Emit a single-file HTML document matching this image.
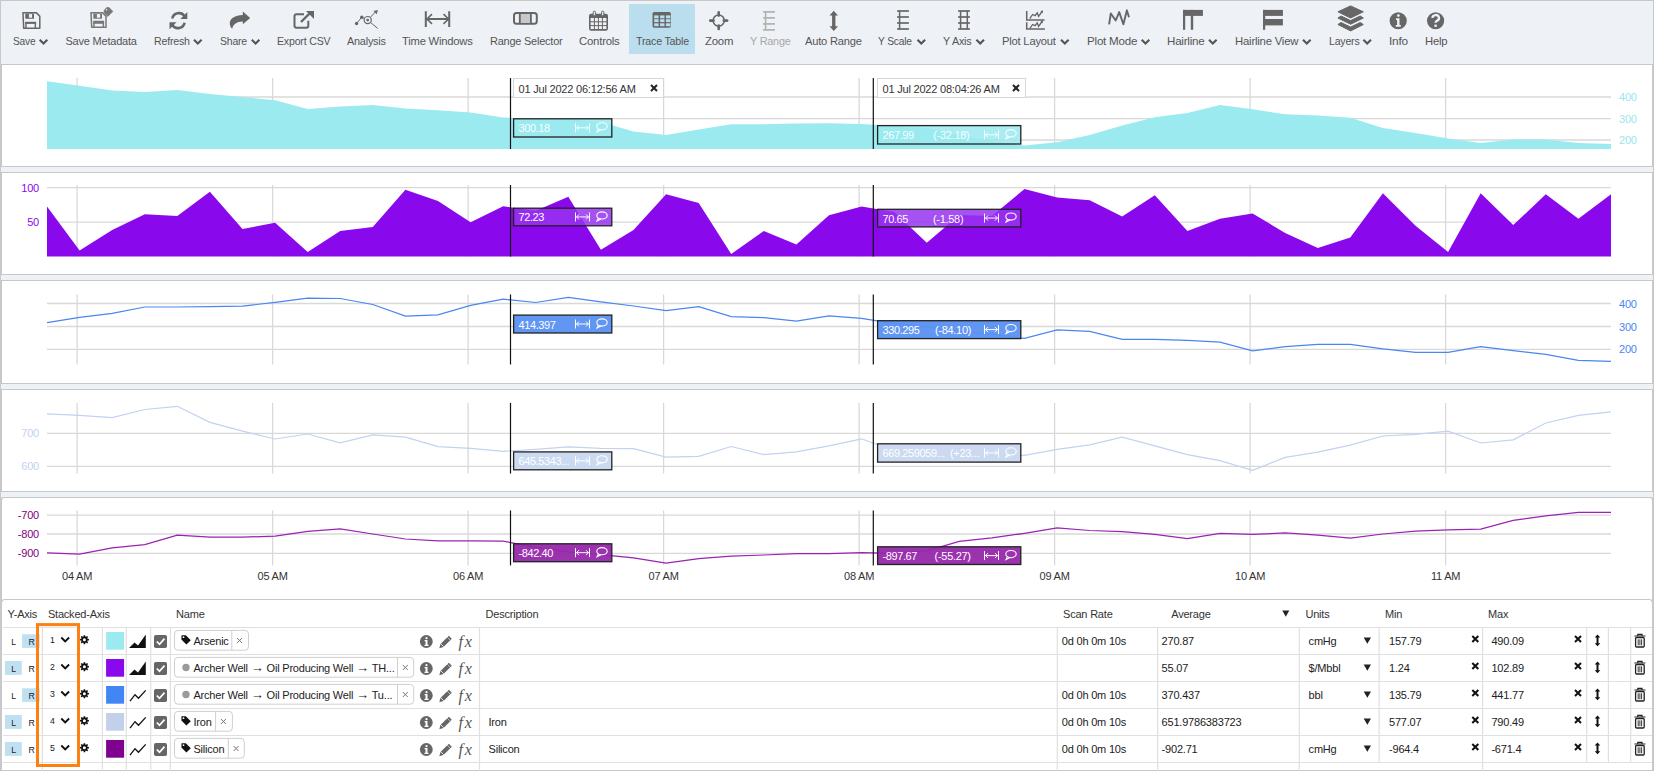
<!DOCTYPE html>
<html><head><meta charset="utf-8"><style>
*{box-sizing:border-box;margin:0;padding:0}
html,body{width:1654px;height:771px;overflow:hidden;background:#eef1f5;font-family:"Liberation Sans", sans-serif;font-size:11px;letter-spacing:-0.2px;color:#222}
.a{position:absolute;white-space:nowrap;line-height:1}
.tb{color:#555}
</style></head><body>

<div class="a" style="left:0;top:0;width:1654px;height:65px;background:#eef1f5;border:1px solid #c8c8c8"></div>
<div class="a" style="left:0;top:64px;width:1654px;height:103px;background:#fff;border:1px solid #c8c8c8;border-left:2px solid #c8c8c8;border-right:2px solid #c8c8c8;"></div>
<div class="a" style="left:0;top:172px;width:1654px;height:103px;background:#fff;border:1px solid #c8c8c8;border-left:2px solid #c8c8c8;border-right:2px solid #c8c8c8;"></div>
<div class="a" style="left:0;top:280px;width:1654px;height:104px;background:#fff;border:1px solid #c8c8c8;border-left:2px solid #c8c8c8;border-right:2px solid #c8c8c8;"></div>
<div class="a" style="left:0;top:389px;width:1654px;height:103px;background:#fff;border:1px solid #c8c8c8;border-left:2px solid #c8c8c8;border-right:2px solid #c8c8c8;"></div>
<div class="a" style="left:0;top:497px;width:1654px;height:107px;background:#fff;border:1px solid #c8c8c8;border-left:2px solid #c8c8c8;border-right:2px solid #c8c8c8;border-top-left-radius:4px;border-top-right-radius:4px;"></div>
<div class="a" style="left:0;top:599px;width:1654px;height:172px;background:#fff;border:1px solid #c8c8c8;border-left:2px solid #c8c8c8;border-right:2px solid #c8c8c8;border-top-left-radius:5px;border-top-right-radius:5px"></div>
<div class="a" style="left:0;top:0;width:1px;height:771px;background:#c8c8c8"></div>
<div class="a" style="left:1653px;top:0;width:1px;height:771px;background:#c8c8c8"></div>
<svg class="a" style="left:0;top:0" width="1654" height="771" font-family='"Liberation Sans", sans-serif' font-size="11" letter-spacing="-0.2">
<line x1="47" y1="97" x2="1611" y2="97" stroke="#d9d9d9" stroke-width="1.3"/>
<line x1="47" y1="118.6" x2="1611" y2="118.6" stroke="#d9d9d9" stroke-width="1.3"/>
<line x1="47" y1="140" x2="1611" y2="140" stroke="#d9d9d9" stroke-width="1.3"/>
<line x1="77.1" y1="78" x2="77.1" y2="149" stroke="#d9d9d9" stroke-width="1.3"/>
<line x1="272.6" y1="78" x2="272.6" y2="149" stroke="#d9d9d9" stroke-width="1.3"/>
<line x1="468.1" y1="78" x2="468.1" y2="149" stroke="#d9d9d9" stroke-width="1.3"/>
<line x1="663.6" y1="78" x2="663.6" y2="149" stroke="#d9d9d9" stroke-width="1.3"/>
<line x1="859.1" y1="78" x2="859.1" y2="149" stroke="#d9d9d9" stroke-width="1.3"/>
<line x1="1054.6" y1="78" x2="1054.6" y2="149" stroke="#d9d9d9" stroke-width="1.3"/>
<line x1="1250.1" y1="78" x2="1250.1" y2="149" stroke="#d9d9d9" stroke-width="1.3"/>
<line x1="1445.6" y1="78" x2="1445.6" y2="149" stroke="#d9d9d9" stroke-width="1.3"/>
<line x1="47" y1="187.6" x2="1611" y2="187.6" stroke="#d9d9d9" stroke-width="1.3"/>
<line x1="47" y1="222.2" x2="1611" y2="222.2" stroke="#d9d9d9" stroke-width="1.3"/>
<line x1="77.1" y1="185" x2="77.1" y2="256.5" stroke="#d9d9d9" stroke-width="1.3"/>
<line x1="272.6" y1="185" x2="272.6" y2="256.5" stroke="#d9d9d9" stroke-width="1.3"/>
<line x1="468.1" y1="185" x2="468.1" y2="256.5" stroke="#d9d9d9" stroke-width="1.3"/>
<line x1="663.6" y1="185" x2="663.6" y2="256.5" stroke="#d9d9d9" stroke-width="1.3"/>
<line x1="859.1" y1="185" x2="859.1" y2="256.5" stroke="#d9d9d9" stroke-width="1.3"/>
<line x1="1054.6" y1="185" x2="1054.6" y2="256.5" stroke="#d9d9d9" stroke-width="1.3"/>
<line x1="1250.1" y1="185" x2="1250.1" y2="256.5" stroke="#d9d9d9" stroke-width="1.3"/>
<line x1="1445.6" y1="185" x2="1445.6" y2="256.5" stroke="#d9d9d9" stroke-width="1.3"/>
<line x1="47" y1="303.5" x2="1611" y2="303.5" stroke="#d9d9d9" stroke-width="1.3"/>
<line x1="47" y1="326.5" x2="1611" y2="326.5" stroke="#d9d9d9" stroke-width="1.3"/>
<line x1="47" y1="349.3" x2="1611" y2="349.3" stroke="#d9d9d9" stroke-width="1.3"/>
<line x1="77.1" y1="294.4" x2="77.1" y2="364.5" stroke="#d9d9d9" stroke-width="1.3"/>
<line x1="272.6" y1="294.4" x2="272.6" y2="364.5" stroke="#d9d9d9" stroke-width="1.3"/>
<line x1="468.1" y1="294.4" x2="468.1" y2="364.5" stroke="#d9d9d9" stroke-width="1.3"/>
<line x1="663.6" y1="294.4" x2="663.6" y2="364.5" stroke="#d9d9d9" stroke-width="1.3"/>
<line x1="859.1" y1="294.4" x2="859.1" y2="364.5" stroke="#d9d9d9" stroke-width="1.3"/>
<line x1="1054.6" y1="294.4" x2="1054.6" y2="364.5" stroke="#d9d9d9" stroke-width="1.3"/>
<line x1="1250.1" y1="294.4" x2="1250.1" y2="364.5" stroke="#d9d9d9" stroke-width="1.3"/>
<line x1="1445.6" y1="294.4" x2="1445.6" y2="364.5" stroke="#d9d9d9" stroke-width="1.3"/>
<line x1="47" y1="433.4" x2="1611" y2="433.4" stroke="#d9d9d9" stroke-width="1.3"/>
<line x1="47" y1="466.4" x2="1611" y2="466.4" stroke="#d9d9d9" stroke-width="1.3"/>
<line x1="77.1" y1="402.9" x2="77.1" y2="473.6" stroke="#d9d9d9" stroke-width="1.3"/>
<line x1="272.6" y1="402.9" x2="272.6" y2="473.6" stroke="#d9d9d9" stroke-width="1.3"/>
<line x1="468.1" y1="402.9" x2="468.1" y2="473.6" stroke="#d9d9d9" stroke-width="1.3"/>
<line x1="663.6" y1="402.9" x2="663.6" y2="473.6" stroke="#d9d9d9" stroke-width="1.3"/>
<line x1="859.1" y1="402.9" x2="859.1" y2="473.6" stroke="#d9d9d9" stroke-width="1.3"/>
<line x1="1054.6" y1="402.9" x2="1054.6" y2="473.6" stroke="#d9d9d9" stroke-width="1.3"/>
<line x1="1250.1" y1="402.9" x2="1250.1" y2="473.6" stroke="#d9d9d9" stroke-width="1.3"/>
<line x1="1445.6" y1="402.9" x2="1445.6" y2="473.6" stroke="#d9d9d9" stroke-width="1.3"/>
<line x1="47" y1="515.1" x2="1611" y2="515.1" stroke="#d9d9d9" stroke-width="1.3"/>
<line x1="47" y1="534" x2="1611" y2="534" stroke="#d9d9d9" stroke-width="1.3"/>
<line x1="47" y1="553.4" x2="1611" y2="553.4" stroke="#d9d9d9" stroke-width="1.3"/>
<line x1="77.1" y1="510.4" x2="77.1" y2="565.4" stroke="#d9d9d9" stroke-width="1.3"/>
<line x1="272.6" y1="510.4" x2="272.6" y2="565.4" stroke="#d9d9d9" stroke-width="1.3"/>
<line x1="468.1" y1="510.4" x2="468.1" y2="565.4" stroke="#d9d9d9" stroke-width="1.3"/>
<line x1="663.6" y1="510.4" x2="663.6" y2="565.4" stroke="#d9d9d9" stroke-width="1.3"/>
<line x1="859.1" y1="510.4" x2="859.1" y2="565.4" stroke="#d9d9d9" stroke-width="1.3"/>
<line x1="1054.6" y1="510.4" x2="1054.6" y2="565.4" stroke="#d9d9d9" stroke-width="1.3"/>
<line x1="1250.1" y1="510.4" x2="1250.1" y2="565.4" stroke="#d9d9d9" stroke-width="1.3"/>
<line x1="1445.6" y1="510.4" x2="1445.6" y2="565.4" stroke="#d9d9d9" stroke-width="1.3"/>
<polygon points="47,149 47.0,81.3 79.6,85.7 112.2,90.4 144.8,92.0 177.3,90.1 209.9,93.9 242.5,97.0 275.1,100.2 307.7,109.0 340.2,106.5 372.8,104.9 405.4,108.4 438.0,110.2 470.6,112.4 503.2,117.5 535.8,118.5 568.3,119.0 600.9,122.0 633.5,131.4 666.1,134.9 698.7,129.6 731.2,124.3 763.8,124.3 796.4,123.6 829.0,123.3 861.6,124.0 894.2,126.0 926.8,128.0 959.3,135.4 991.9,141.2 1024.5,145.5 1057.1,142.2 1089.7,134.9 1122.2,125.4 1154.8,117.3 1187.4,113.1 1220.0,105.1 1252.6,109.3 1285.2,114.2 1317.8,115.6 1350.3,117.7 1382.9,127.9 1415.5,133.1 1448.1,138.4 1480.7,142.9 1513.2,139.4 1545.8,139.4 1578.4,142.9 1611.0,144.0 1611,149" fill="#9aeaf0"/>
<polygon points="47,256.5 47.0,206.4 79.6,250.4 112.2,230.0 144.8,214.3 177.3,215.9 209.9,191.7 242.5,229.0 275.1,222.8 307.7,252.0 340.2,231.0 372.8,226.9 405.4,189.8 438.0,201.1 470.6,222.2 503.2,206.2 535.8,210.8 568.3,196.7 600.9,249.7 633.5,230.0 666.1,194.3 698.7,203.0 731.2,253.9 763.8,231.1 796.4,244.4 829.0,215.3 861.6,206.6 894.2,212.0 926.8,242.7 959.3,215.0 991.9,216.0 1024.5,189.0 1057.1,197.5 1089.7,200.2 1122.2,216.4 1154.8,195.3 1187.4,231.1 1220.0,218.8 1252.6,213.6 1285.2,232.9 1317.8,247.9 1350.3,237.4 1382.9,193.2 1415.5,225.8 1448.1,252.1 1480.7,193.2 1513.2,225.1 1545.8,194.3 1578.4,218.8 1611.0,194.3 1611,256.5" fill="#8a08ec"/>
<polyline points="47.0,322.7 79.6,317.4 112.2,313.3 144.8,307.0 177.3,307.0 209.9,306.7 242.5,306.1 275.1,302.3 307.7,298.2 340.2,298.5 372.8,304.5 405.4,316.1 438.0,314.9 470.6,305.4 503.2,299.1 535.8,302.5 568.3,297.3 600.9,301.8 633.5,306.0 666.1,310.6 698.7,306.7 731.2,316.6 763.8,317.6 796.4,321.1 829.0,315.9 861.6,318.3 894.2,323.6 926.8,327.1 959.3,331.0 991.9,334.4 1024.5,338.3 1057.1,329.9 1089.7,331.3 1122.2,339.3 1154.8,339.3 1187.4,340.4 1220.0,342.2 1252.6,350.9 1285.2,346.7 1317.8,344.3 1350.3,344.3 1382.9,348.8 1415.5,352.3 1448.1,352.3 1480.7,346.7 1513.2,350.6 1545.8,354.4 1578.4,360.4 1611.0,361.4" fill="none" stroke="#4a86f0" stroke-width="1.2"/>
<polyline points="47.0,413.9 79.6,415.4 112.2,417.6 144.8,409.5 177.3,406.3 209.9,422.4 242.5,431.2 275.1,439.0 307.7,434.0 340.2,442.8 372.8,434.9 405.4,437.1 438.0,446.6 470.6,448.4 503.2,451.3 535.8,449.3 568.3,446.9 600.9,448.3 633.5,448.6 666.1,457.1 698.7,456.4 731.2,446.5 763.8,454.6 796.4,451.8 829.0,445.8 861.6,438.8 894.2,451.0 926.8,455.0 959.3,456.0 991.9,455.5 1024.5,455.3 1057.1,449.3 1089.7,444.8 1122.2,437.1 1154.8,445.8 1187.4,454.6 1220.0,460.6 1252.6,470.4 1285.2,457.4 1317.8,452.2 1350.3,445.1 1382.9,436.0 1415.5,434.3 1448.1,431.1 1480.7,443.0 1513.2,439.9 1545.8,423.0 1578.4,415.3 1611.0,411.8" fill="none" stroke="#c2d2f0" stroke-width="1.2"/>
<polyline points="47.0,552.8 79.6,554.1 112.2,547.8 144.8,544.6 177.3,535.2 209.9,537.1 242.5,537.1 275.1,536.2 307.7,531.4 340.2,528.9 372.8,534.0 405.4,539.0 438.0,540.9 470.6,540.9 503.2,541.2 535.8,547.3 568.3,551.9 600.9,554.7 633.5,557.9 666.1,563.1 698.7,558.6 731.2,556.1 763.8,555.0 796.4,553.6 829.0,553.6 861.6,552.6 894.2,553.3 926.8,550.8 959.3,541.4 991.9,537.9 1024.5,533.3 1057.1,528.0 1089.7,530.5 1122.2,531.6 1154.8,534.4 1187.4,538.6 1220.0,533.3 1252.6,534.4 1285.2,533.0 1317.8,535.1 1350.3,538.2 1382.9,534.0 1415.5,531.2 1448.1,529.8 1480.7,529.1 1513.2,520.3 1545.8,515.8 1578.4,512.3 1611.0,512.3" fill="none" stroke="#9a22b4" stroke-width="1.25"/>
<text x="1619" y="101" fill="#9ae6ee" text-anchor="start" >400</text>
<text x="1619" y="122.6" fill="#9ae6ee" text-anchor="start" >300</text>
<text x="1619" y="144" fill="#9ae6ee" text-anchor="start" >200</text>
<text x="39" y="191.6" fill="#8a08ec" text-anchor="end" >100</text>
<text x="39" y="226.2" fill="#8a08ec" text-anchor="end" >50</text>
<text x="1619" y="307.5" fill="#4a86f0" text-anchor="start" >400</text>
<text x="1619" y="330.5" fill="#4a86f0" text-anchor="start" >300</text>
<text x="1619" y="353.3" fill="#4a86f0" text-anchor="start" >200</text>
<text x="39" y="437.4" fill="#c2d2f0" text-anchor="end" >700</text>
<text x="39" y="470.4" fill="#c2d2f0" text-anchor="end" >600</text>
<text x="39" y="519.1" fill="#800080" text-anchor="end" >-700</text>
<text x="39" y="538" fill="#800080" text-anchor="end" >-800</text>
<text x="39" y="557.4" fill="#800080" text-anchor="end" >-900</text>
<text x="77.1" y="580" fill="#333" text-anchor="middle" >04 AM</text>
<text x="272.6" y="580" fill="#333" text-anchor="middle" >05 AM</text>
<text x="468.1" y="580" fill="#333" text-anchor="middle" >06 AM</text>
<text x="663.6" y="580" fill="#333" text-anchor="middle" >07 AM</text>
<text x="859.1" y="580" fill="#333" text-anchor="middle" >08 AM</text>
<text x="1054.6" y="580" fill="#333" text-anchor="middle" >09 AM</text>
<text x="1250.1" y="580" fill="#333" text-anchor="middle" >10 AM</text>
<text x="1445.6" y="580" fill="#333" text-anchor="middle" >11 AM</text>
<line x1="510.5" y1="78" x2="510.5" y2="149" stroke="#111" stroke-width="1.2"/>
<line x1="510.5" y1="185" x2="510.5" y2="256.5" stroke="#111" stroke-width="1.2"/>
<line x1="510.5" y1="294.4" x2="510.5" y2="364.5" stroke="#111" stroke-width="1.2"/>
<line x1="510.5" y1="402.9" x2="510.5" y2="473.6" stroke="#111" stroke-width="1.2"/>
<line x1="510.5" y1="510.4" x2="510.5" y2="565.4" stroke="#111" stroke-width="1.2"/>
<line x1="873.3" y1="78" x2="873.3" y2="149" stroke="#111" stroke-width="1.2"/>
<line x1="873.3" y1="185" x2="873.3" y2="256.5" stroke="#111" stroke-width="1.2"/>
<line x1="873.3" y1="294.4" x2="873.3" y2="364.5" stroke="#111" stroke-width="1.2"/>
<line x1="873.3" y1="402.9" x2="873.3" y2="473.6" stroke="#111" stroke-width="1.2"/>
<line x1="873.3" y1="510.4" x2="873.3" y2="565.4" stroke="#111" stroke-width="1.2"/>
<rect x="513.5" y="78.5" width="150" height="19" fill="#fff" stroke="#d6d6d6" stroke-width="1"/>
<text x="518.5" y="92.5" fill="#333" text-anchor="start" >01 Jul 2022 06:12:56 AM</text>
<path d="M651,85 l6,6 M657,85 l-6,6" stroke="#222" stroke-width="2"/>
<rect x="877.5" y="78.5" width="148" height="19" fill="#fff" stroke="#d6d6d6" stroke-width="1"/>
<text x="882.5" y="92.5" fill="#333" text-anchor="start" >01 Jul 2022 08:04:26 AM</text>
<path d="M1013,85 l6,6 M1019,85 l-6,6" stroke="#222" stroke-width="2"/>
<rect x="513.6" y="118.8" width="98.2" height="18.2" fill="rgba(154,234,240,0.85)" stroke="#222" stroke-width="1.3"/>
<text x="518.5" y="132.35000000000002" fill="#f4ffff" text-anchor="start" letter-spacing="-0.4">300.18</text>
<path d="M575.5,123.35000000000001 v9 M589.5,123.35000000000001 v9 M576.5,127.85000000000001 h12 M579,125.35000000000001 l-2.5,2.5 l2.5,2.5 M586,125.35000000000001 l2.5,2.5 l-2.5,2.5" fill="none" stroke="#f4ffff" stroke-width="1"/>
<ellipse cx="602" cy="126.35000000000001" rx="5.2" ry="3.6" fill="none" stroke="#f4ffff" stroke-width="1.1"/>
<path d="M598.5,128.85000000000002 l-1.5,3 l4,-2" fill="none" stroke="#f4ffff" stroke-width="1.1"/>
<rect x="877.6" y="125.6" width="143.2" height="18.4" fill="rgba(154,234,240,0.85)" stroke="#222" stroke-width="1.3"/>
<text x="882.5" y="139.25" fill="#f4ffff" text-anchor="start" letter-spacing="-0.4">267.99</text>
<text x="933.3" y="139.25" fill="#f4ffff" text-anchor="start" letter-spacing="-0.3">(-32.18)</text>
<path d="M984.5,130.25 v9 M998.5,130.25 v9 M985.5,134.75 h12 M988,132.25 l-2.5,2.5 l2.5,2.5 M995,132.25 l2.5,2.5 l-2.5,2.5" fill="none" stroke="#f4ffff" stroke-width="1"/>
<ellipse cx="1011" cy="133.25" rx="5.2" ry="3.6" fill="none" stroke="#f4ffff" stroke-width="1.1"/>
<path d="M1007.5,135.75 l-1.5,3 l4,-2" fill="none" stroke="#f4ffff" stroke-width="1.1"/>
<rect x="513.6" y="208.2" width="98.2" height="17.599999999999998" fill="rgba(150,50,240,0.85)" stroke="#222" stroke-width="1.3"/>
<text x="518.5" y="221.45" fill="#fff" text-anchor="start" letter-spacing="-0.4">72.23</text>
<path d="M575.5,212.45 v9 M589.5,212.45 v9 M576.5,216.95 h12 M579,214.45 l-2.5,2.5 l2.5,2.5 M586,214.45 l2.5,2.5 l-2.5,2.5" fill="none" stroke="#fff" stroke-width="1"/>
<ellipse cx="602" cy="215.45" rx="5.2" ry="3.6" fill="none" stroke="#fff" stroke-width="1.1"/>
<path d="M598.5,217.95 l-1.5,3 l4,-2" fill="none" stroke="#fff" stroke-width="1.1"/>
<rect x="877.6" y="209.29999999999998" width="143.2" height="17.599999999999998" fill="rgba(150,50,240,0.85)" stroke="#222" stroke-width="1.3"/>
<text x="882.5" y="222.54999999999998" fill="#fff" text-anchor="start" letter-spacing="-0.4">70.65</text>
<text x="933" y="222.54999999999998" fill="#fff" text-anchor="start" letter-spacing="-0.3">(-1.58)</text>
<path d="M984.5,213.54999999999998 v9 M998.5,213.54999999999998 v9 M985.5,218.04999999999998 h12 M988,215.54999999999998 l-2.5,2.5 l2.5,2.5 M995,215.54999999999998 l2.5,2.5 l-2.5,2.5" fill="none" stroke="#fff" stroke-width="1"/>
<ellipse cx="1011" cy="216.54999999999998" rx="5.2" ry="3.6" fill="none" stroke="#fff" stroke-width="1.1"/>
<path d="M1007.5,219.04999999999998 l-1.5,3 l4,-2" fill="none" stroke="#fff" stroke-width="1.1"/>
<rect x="513.6" y="315.1" width="98.2" height="17.9" fill="rgba(90,144,242,0.95)" stroke="#222" stroke-width="1.3"/>
<text x="518.5" y="328.5" fill="#fff" text-anchor="start" letter-spacing="-0.4">414.397</text>
<path d="M575.5,319.5 v9 M589.5,319.5 v9 M576.5,324.0 h12 M579,321.5 l-2.5,2.5 l2.5,2.5 M586,321.5 l2.5,2.5 l-2.5,2.5" fill="none" stroke="#fff" stroke-width="1"/>
<ellipse cx="602" cy="322.5" rx="5.2" ry="3.6" fill="none" stroke="#fff" stroke-width="1.1"/>
<path d="M598.5,325.0 l-1.5,3 l4,-2" fill="none" stroke="#fff" stroke-width="1.1"/>
<rect x="877.6" y="320.70000000000005" width="143.2" height="17.9" fill="rgba(90,144,242,0.95)" stroke="#222" stroke-width="1.3"/>
<text x="882.5" y="334.1" fill="#fff" text-anchor="start" letter-spacing="-0.4">330.295</text>
<text x="935" y="334.1" fill="#fff" text-anchor="start" letter-spacing="-0.3">(-84.10)</text>
<path d="M984.5,325.1 v9 M998.5,325.1 v9 M985.5,329.6 h12 M988,327.1 l-2.5,2.5 l2.5,2.5 M995,327.1 l2.5,2.5 l-2.5,2.5" fill="none" stroke="#fff" stroke-width="1"/>
<ellipse cx="1011" cy="328.1" rx="5.2" ry="3.6" fill="none" stroke="#fff" stroke-width="1.1"/>
<path d="M1007.5,330.6 l-1.5,3 l4,-2" fill="none" stroke="#fff" stroke-width="1.1"/>
<rect x="513.6" y="451.90000000000003" width="98.2" height="17.9" fill="rgba(200,216,240,0.95)" stroke="#222" stroke-width="1.3"/>
<text x="518.5" y="465.3" fill="#fff" text-anchor="start" letter-spacing="-0.4">645.5343...</text>
<path d="M575.5,456.3 v9 M589.5,456.3 v9 M576.5,460.8 h12 M579,458.3 l-2.5,2.5 l2.5,2.5 M586,458.3 l2.5,2.5 l-2.5,2.5" fill="none" stroke="#fff" stroke-width="1"/>
<ellipse cx="602" cy="459.3" rx="5.2" ry="3.6" fill="none" stroke="#fff" stroke-width="1.1"/>
<path d="M598.5,461.8 l-1.5,3 l4,-2" fill="none" stroke="#fff" stroke-width="1.1"/>
<rect x="877.6" y="443.8" width="143.2" height="18.299999999999997" fill="rgba(200,216,240,0.95)" stroke="#222" stroke-width="1.3"/>
<text x="882.5" y="457.4" fill="#fff" text-anchor="start" letter-spacing="-0.4">669.259059...</text>
<text x="950" y="457.4" fill="#fff" text-anchor="start" letter-spacing="-0.3">(+23...</text>
<path d="M984.5,448.4 v9 M998.5,448.4 v9 M985.5,452.9 h12 M988,450.4 l-2.5,2.5 l2.5,2.5 M995,450.4 l2.5,2.5 l-2.5,2.5" fill="none" stroke="#fff" stroke-width="1"/>
<ellipse cx="1011" cy="451.4" rx="5.2" ry="3.6" fill="none" stroke="#fff" stroke-width="1.1"/>
<path d="M1007.5,453.9 l-1.5,3 l4,-2" fill="none" stroke="#fff" stroke-width="1.1"/>
<rect x="513.6" y="543.8000000000001" width="98.2" height="17.9" fill="rgba(150,40,170,0.95)" stroke="#222" stroke-width="1.3"/>
<text x="518.5" y="557.2" fill="#fff" text-anchor="start" letter-spacing="-0.4">-842.40</text>
<path d="M575.5,548.2 v9 M589.5,548.2 v9 M576.5,552.7 h12 M579,550.2 l-2.5,2.5 l2.5,2.5 M586,550.2 l2.5,2.5 l-2.5,2.5" fill="none" stroke="#fff" stroke-width="1"/>
<ellipse cx="602" cy="551.2" rx="5.2" ry="3.6" fill="none" stroke="#fff" stroke-width="1.1"/>
<path d="M598.5,553.7 l-1.5,3 l4,-2" fill="none" stroke="#fff" stroke-width="1.1"/>
<rect x="877.6" y="546.8000000000001" width="143.2" height="17.7" fill="rgba(150,40,170,0.95)" stroke="#222" stroke-width="1.3"/>
<text x="882.5" y="560.1" fill="#fff" text-anchor="start" letter-spacing="-0.4">-897.67</text>
<text x="934.6" y="560.1" fill="#fff" text-anchor="start" letter-spacing="-0.3">(-55.27)</text>
<path d="M984.5,551.1 v9 M998.5,551.1 v9 M985.5,555.6 h12 M988,553.1 l-2.5,2.5 l2.5,2.5 M995,553.1 l2.5,2.5 l-2.5,2.5" fill="none" stroke="#fff" stroke-width="1"/>
<ellipse cx="1011" cy="554.1" rx="5.2" ry="3.6" fill="none" stroke="#fff" stroke-width="1.1"/>
<path d="M1007.5,556.6 l-1.5,3 l4,-2" fill="none" stroke="#fff" stroke-width="1.1"/>
</svg>
<div class="a" style="left:629px;top:4px;width:66px;height:50px;background:#badeee"></div>
<div class="a tb" style="left:12.7px;top:35.5px;color:#555;transform:scaleX(0.925);transform-origin:0 0">Save</div>
<div class="a tb" style="left:65.4px;top:35.5px;color:#555;transform:scaleX(1.0);transform-origin:0 0">Save Metadata</div>
<div class="a tb" style="left:153.6px;top:35.5px;color:#555;transform:scaleX(0.962);transform-origin:0 0">Refresh</div>
<div class="a tb" style="left:219.7px;top:35.5px;color:#555;transform:scaleX(0.95);transform-origin:0 0">Share</div>
<div class="a tb" style="left:277.2px;top:35.5px;color:#555;transform:scaleX(0.962);transform-origin:0 0">Export CSV</div>
<div class="a tb" style="left:347px;top:35.5px;color:#555;transform:scaleX(0.985);transform-origin:0 0">Analysis</div>
<div class="a tb" style="left:402.4px;top:35.5px;color:#555;transform:scaleX(1.019);transform-origin:0 0">Time Windows</div>
<div class="a tb" style="left:489.6px;top:35.5px;color:#555;transform:scaleX(0.992);transform-origin:0 0">Range Selector</div>
<div class="a tb" style="left:578.6px;top:35.5px;color:#555;transform:scaleX(1.031);transform-origin:0 0">Controls</div>
<div class="a tb" style="left:635.7px;top:35.5px;color:#555;transform:scaleX(0.969);transform-origin:0 0">Trace Table</div>
<div class="a tb" style="left:704.5px;top:35.5px;color:#555;transform:scaleX(1.033);transform-origin:0 0">Zoom</div>
<div class="a tb" style="left:749.5px;top:35.5px;color:#a8a8a8;transform:scaleX(0.985);transform-origin:0 0">Y Range</div>
<div class="a tb" style="left:805.4px;top:35.5px;color:#555;transform:scaleX(1.012);transform-origin:0 0">Auto Range</div>
<div class="a tb" style="left:878.4px;top:35.5px;color:#555;transform:scaleX(0.933);transform-origin:0 0">Y Scale</div>
<div class="a tb" style="left:942.9px;top:35.5px;color:#555;transform:scaleX(0.976);transform-origin:0 0">Y Axis</div>
<div class="a tb" style="left:1001.7px;top:35.5px;color:#555;transform:scaleX(1.017);transform-origin:0 0">Plot Layout</div>
<div class="a tb" style="left:1086.7px;top:35.5px;color:#555;transform:scaleX(1.053);transform-origin:0 0">Plot Mode</div>
<div class="a tb" style="left:1167.4px;top:35.5px;color:#555;transform:scaleX(1.051);transform-origin:0 0">Hairline</div>
<div class="a tb" style="left:1234.7px;top:35.5px;color:#555;transform:scaleX(1.03);transform-origin:0 0">Hairline View</div>
<div class="a tb" style="left:1328.5px;top:35.5px;color:#555;transform:scaleX(0.958);transform-origin:0 0">Layers</div>
<div class="a tb" style="left:1389px;top:35.5px;color:#555;transform:scaleX(1.076);transform-origin:0 0">Info</div>
<div class="a tb" style="left:1424.7px;top:35.5px;color:#555;transform:scaleX(1.024);transform-origin:0 0">Help</div>
<svg class="a" style="left:0;top:0" width="1654" height="65">
<path d="M39.7,39.8 l3.8,3.8 l3.8,-3.8" fill="none" stroke="#555" stroke-width="2.1"/>
<path d="M194,39.8 l3.8,3.8 l3.8,-3.8" fill="none" stroke="#555" stroke-width="2.1"/>
<path d="M251.8,39.8 l3.8,3.8 l3.8,-3.8" fill="none" stroke="#555" stroke-width="2.1"/>
<path d="M917.5,39.8 l3.8,3.8 l3.8,-3.8" fill="none" stroke="#555" stroke-width="2.1"/>
<path d="M976.4,39.8 l3.8,3.8 l3.8,-3.8" fill="none" stroke="#555" stroke-width="2.1"/>
<path d="M1061,39.8 l3.8,3.8 l3.8,-3.8" fill="none" stroke="#555" stroke-width="2.1"/>
<path d="M1141.7,39.8 l3.8,3.8 l3.8,-3.8" fill="none" stroke="#555" stroke-width="2.1"/>
<path d="M1209,39.8 l3.8,3.8 l3.8,-3.8" fill="none" stroke="#555" stroke-width="2.1"/>
<path d="M1303,39.8 l3.8,3.8 l3.8,-3.8" fill="none" stroke="#555" stroke-width="2.1"/>
<path d="M1363.4,39.8 l3.8,3.8 l3.8,-3.8" fill="none" stroke="#555" stroke-width="2.1"/>
<path d="M22.95,12.65 h13.3 l3.55,3.55 v12.149999999999999 h-16.1 z" fill="none" stroke="#666" stroke-width="1.5" stroke-linejoin="round"/>
<rect x="25.3" y="13.4" width="8.7" height="5.4" rx="0.6" fill="#666"/>
<rect x="28.9" y="14.100000000000001" width="3.2" height="3.6" fill="#eef1f5"/>
<path d="M25.95,28.1 v-5.4 h9.4 v5.4" fill="none" stroke="#666" stroke-width="1.4"/>
<path d="M25.3,22.8 h10.8" stroke="#666" stroke-width="2"/>
<path d="M90.95,12.65 h11.5 l3.55,3.55 v10.95 h-14.3 z" fill="none" stroke="#777" stroke-width="1.5" stroke-linejoin="round"/>
<rect x="93.3" y="13.4" width="8.7" height="5.4" rx="0.6" fill="#777"/>
<rect x="96.9" y="14.100000000000001" width="3.2" height="3.6" fill="#eef1f5"/>
<path d="M93.95,26.9 v-5.4 h9.4 v5.4" fill="none" stroke="#777" stroke-width="1.4"/>
<path d="M93.3,22.8 h10.8" stroke="#777" stroke-width="2"/>
<path d="M104.2,10.2 l2.6,-2.6 h2.2 l3.8,3.8 l-5,5 l-3.6,-3.6 z" fill="#777" stroke="#777" stroke-width="0.8" stroke-linejoin="round"/><circle cx="106.6" cy="9.8" r="0.8" fill="#eef1f5"/>
<path d="M172.2,18.5 a6.8,6.8 0 0 1 12.2,-2.5" fill="none" stroke="#666" stroke-width="2.6"/>
<path d="M187.3,12 v7 h-7 z" fill="#666"/>
<path d="M184.6,22.7 a6.8,6.8 0 0 1 -12.2,2.5" fill="none" stroke="#666" stroke-width="2.6"/>
<path d="M169.5,29.2 v-7 h7 z" fill="#666"/>
<path d="M250.2,17.9 L242.8,11.6 V14.9 C235,14.9 229.8,18.5 229.8,23.2 C229.8,25.6 230.8,27.6 232.2,28.8 C232.8,25 236.5,21.5 242.8,21.5 V24.2 Z" fill="#666"/>
<path d="M304,14.2 h-7.5 a2,2 0 0 0 -2,2 v9.5 a2,2 0 0 0 2,2 h9.8 a2,2 0 0 0 2,-2 v-5" fill="none" stroke="#666" stroke-width="2"/>
<path d="M301,22 l9,-9" stroke="#666" stroke-width="2.4"/>
<path d="M306,11 h8 v8 z" fill="#666"/>
<path d="M356.6,23.5 L361.8,17.2 L367.7,20.1 L376.5,10.8 M367.7,20.1 L377.7,28.4" fill="none" stroke="#666" stroke-width="1"/>
<circle cx="356.6" cy="23.5" r="1.7" fill="#666"/><circle cx="361.8" cy="17.2" r="1.7" fill="#666"/>
<circle cx="367.7" cy="20.1" r="3.6" fill="#eef1f5" stroke="#666" stroke-width="1.2"/><circle cx="367.7" cy="20.1" r="1.4" fill="#666"/>
<path d="M377.8,9.9 l-1,4.3 l-3.3,-3.3 z" fill="#666"/>
<path d="M425.8,11.2 v15.8 M449.2,11.2 v15.8 M426.5,19 h22" fill="none" stroke="#666" stroke-width="2"/>
<path d="M432,14.2 l-5,4.8 l5,4.8 M443.5,14.2 l5,4.8 l-5,4.8" fill="none" stroke="#666" stroke-width="1.6"/>
<rect x="514" y="13" width="22.8" height="10.8" rx="2.5" fill="none" stroke="#666" stroke-width="2"/>
<rect x="520" y="14" width="10.8" height="8.8" fill="#c8c8c8"/>
<path d="M519.8,13 v10.8 M530.9,13 v10.8" stroke="#666" stroke-width="1.8"/>
<rect x="589.8" y="14.5" width="17.4" height="15.4" rx="1.5" fill="none" stroke="#666" stroke-width="1.6"/>
<rect x="589.8" y="14.5" width="17.4" height="3.5" fill="#666"/>
<line x1="594.4" y1="18" x2="594.4" y2="30" stroke="#666" stroke-width="1"/>
<line x1="598.4" y1="18" x2="598.4" y2="30" stroke="#666" stroke-width="1"/>
<line x1="602.4" y1="18" x2="602.4" y2="30" stroke="#666" stroke-width="1"/>
<line x1="590" y1="21.8" x2="607" y2="21.8" stroke="#666" stroke-width="1"/>
<line x1="590" y1="25.6" x2="607" y2="25.6" stroke="#666" stroke-width="1"/>
<rect x="593.2" y="11.2" width="2.2" height="4.5" rx="1" fill="#eef1f5" stroke="#666" stroke-width="1"/>
<rect x="601.6" y="11.2" width="2.2" height="4.5" rx="1" fill="#eef1f5" stroke="#666" stroke-width="1"/>
<rect x="652.5" y="12" width="18.4" height="15.7" rx="1.8" fill="#666"/>
<rect x="654.2" y="15.4" width="4.4" height="2.9" fill="#badeee"/>
<rect x="660.1" y="15.4" width="4.4" height="2.9" fill="#badeee"/>
<rect x="666" y="15.4" width="4.4" height="2.9" fill="#badeee"/>
<rect x="654.2" y="19.2" width="4.4" height="2.9" fill="#badeee"/>
<rect x="660.1" y="19.2" width="4.4" height="2.9" fill="#badeee"/>
<rect x="666" y="19.2" width="4.4" height="2.9" fill="#badeee"/>
<rect x="654.2" y="23.3" width="4.4" height="2.9" fill="#badeee"/>
<rect x="660.1" y="23.3" width="4.4" height="2.9" fill="#badeee"/>
<rect x="666" y="23.3" width="4.4" height="2.9" fill="#badeee"/>
<circle cx="718.7" cy="20.6" r="5.6" fill="none" stroke="#666" stroke-width="1.5"/>
<path d="M718.7,12.2 v3.4 M718.7,25.6 v3.4 M710.2,20.6 h3.4 M723.8,20.6 h3.4" stroke="#666" stroke-width="2.6" stroke-linecap="round"/>
<path d="M765.6,11.9 v18" stroke="#b0b0b0" stroke-width="1.5"/>
<path d="M763.1,11.9 h11.8" stroke="#b0b0b0" stroke-width="1.7"/>
<path d="M763.1,17.9 h11.8" stroke="#b0b0b0" stroke-width="1.7"/>
<path d="M763.1,23.9 h11.8" stroke="#b0b0b0" stroke-width="1.7"/>
<path d="M763.1,29.9 h11.8" stroke="#b0b0b0" stroke-width="1.7"/>
<path d="M899.6,11 v18" stroke="#666" stroke-width="1.5"/>
<path d="M897.1,11 h11.8" stroke="#666" stroke-width="1.7"/>
<path d="M897.1,17 h11.8" stroke="#666" stroke-width="1.7"/>
<path d="M897.1,23 h11.8" stroke="#666" stroke-width="1.7"/>
<path d="M897.1,29 h11.8" stroke="#666" stroke-width="1.7"/>
<path d="M833.75,10.8 l4.25,4.6 h-2.6 v10.8 h2.6 l-4.25,4.8 l-4.25,-4.8 h2.6 v-10.8 h-2.6 z" fill="#666"/>
<path d="M960.6,11 v18 M967.3,11 v18" stroke="#666" stroke-width="1.5"/>
<path d="M958.1,11 h11.8" stroke="#666" stroke-width="1.7"/>
<path d="M958.1,17 h11.8" stroke="#666" stroke-width="1.7"/>
<path d="M958.1,23 h11.8" stroke="#666" stroke-width="1.7"/>
<path d="M958.1,29 h11.8" stroke="#666" stroke-width="1.7"/>
<path d="M1026.7,11 v9 h17.9 M1026.7,22.3 v6.6 h18.2" fill="none" stroke="#666" stroke-width="1.5"/>
<path d="M1029.8,18.7 L1032.6,14.5 L1035.1,15.6 L1037.2,12.8 L1038.6,16.3 L1042.4,11" fill="none" stroke="#666" stroke-width="1.3"/>
<path d="M1042.8,10.2 l-2.3,1.4 l2.3,1.6 z" fill="#666"/>
<path d="M1029.8,28.7 L1032.6,24.5 L1035.1,25.6 L1037.2,22.8 L1038.6,26.3 L1042.4,21" fill="none" stroke="#666" stroke-width="1.3"/>
<path d="M1042.8,20.2 l-2.3,1.4 l2.3,1.6 z" fill="#666"/>
<path d="M1109.1,24.3 L1110.8,13.5 L1115.7,20.5 L1119.2,12.1 L1123.4,24.3 L1126.9,10.3 L1129,17.3" fill="none" stroke="#666" stroke-width="1.9" stroke-linejoin="round"/>
<rect x="1183" y="9.9" width="19.9" height="6" fill="#666"/>
<rect x="1183" y="9.9" width="2.2" height="19.9" fill="#666"/>
<rect x="1190.8" y="9.9" width="2.4" height="19.9" fill="#666"/>
<rect x="1263" y="9.9" width="19.9" height="6" fill="#666"/>
<rect x="1263" y="19" width="19.9" height="6.4" fill="#666"/>
<rect x="1263" y="9.9" width="2.2" height="19.9" fill="#666"/>
<path d="M1350.6,5.9 l12.7,5.9 l-12.7,6.2 l-12.7,-6.2 z" fill="#666" stroke="#666" stroke-width="1" stroke-linejoin="round"/>
<path d="M1341,16 l-3.1,2 l12.7,6.2 l12.7,-6.2 l-3.1,-2 l-9.6,4.6 z" fill="#666" stroke="#666" stroke-width="1" stroke-linejoin="round"/>
<path d="M1341,22.5 l-3.1,2 l12.7,6.4 l12.7,-6.4 l-3.1,-2 l-9.6,4.6 z" fill="#666" stroke="#666" stroke-width="1" stroke-linejoin="round"/>
<circle cx="1398.2" cy="20.75" r="8.6" fill="#666"/>
<circle cx="1398.4" cy="15.6" r="1.4" fill="#eef1f5"/>
<path d="M1396,18.3 h3.5 v6.8 h1.3 v1.6 h-5 v-1.6 h1.3 v-5.2 h-1.1 z" fill="#eef1f5"/>
<circle cx="1435.6" cy="20.75" r="8.6" fill="#666"/>
<path d="M1432.4,18 a3.3,3 0 1 1 4.5,2.8 q-1.3,0.6 -1.3,2" fill="none" stroke="#eef1f5" stroke-width="2.3"/>
<rect x="1434.4" y="24.6" width="2.4" height="2.3" fill="#eef1f5"/>
</svg>
<svg class="a" style="left:0;top:0" width="1654" height="771" font-family='"Liberation Sans", sans-serif' font-size="11" letter-spacing="-0.2">
<line x1="3" y1="627.5" x2="1652" y2="627.5" stroke="#e0e0e0" stroke-width="1.2"/>
<line x1="3" y1="654.5" x2="1652" y2="654.5" stroke="#e0e0e0" stroke-width="1.2"/>
<line x1="3" y1="681.5" x2="1652" y2="681.5" stroke="#e0e0e0" stroke-width="1.2"/>
<line x1="3" y1="708.5" x2="1652" y2="708.5" stroke="#e0e0e0" stroke-width="1.2"/>
<line x1="3" y1="735.5" x2="1652" y2="735.5" stroke="#e0e0e0" stroke-width="1.2"/>
<line x1="3" y1="762.5" x2="1652" y2="762.5" stroke="#e0e0e0" stroke-width="1.2"/>
<line x1="42.4" y1="627" x2="42.4" y2="771" stroke="#e0e0e0" stroke-width="1.2"/>
<line x1="102.4" y1="627" x2="102.4" y2="771" stroke="#e0e0e0" stroke-width="1.2"/>
<line x1="126.3" y1="627" x2="126.3" y2="771" stroke="#e0e0e0" stroke-width="1.2"/>
<line x1="150.7" y1="627" x2="150.7" y2="771" stroke="#e0e0e0" stroke-width="1.2"/>
<line x1="170.4" y1="627" x2="170.4" y2="771" stroke="#e0e0e0" stroke-width="1.2"/>
<line x1="479.5" y1="627" x2="479.5" y2="771" stroke="#e0e0e0" stroke-width="1.2"/>
<line x1="1057.3" y1="627" x2="1057.3" y2="771" stroke="#e0e0e0" stroke-width="1.2"/>
<line x1="1157.6" y1="627" x2="1157.6" y2="771" stroke="#e0e0e0" stroke-width="1.2"/>
<line x1="1299.3" y1="627" x2="1299.3" y2="771" stroke="#e0e0e0" stroke-width="1.2"/>
<line x1="1379.1" y1="627" x2="1379.1" y2="762" stroke="#e0e0e0" stroke-width="1.2"/>
<line x1="1482.6" y1="627" x2="1482.6" y2="771" stroke="#e0e0e0" stroke-width="1.2"/>
<line x1="1586.7" y1="627" x2="1586.7" y2="762" stroke="#e0e0e0" stroke-width="1.2"/>
<line x1="1608.4" y1="627" x2="1608.4" y2="762" stroke="#e0e0e0" stroke-width="1.2"/>
<line x1="1630.7" y1="627" x2="1630.7" y2="762" stroke="#e0e0e0" stroke-width="1.2"/>
<text x="7.6" y="618.2" fill="#333" text-anchor="start" >Y-Axis</text>
<text x="47.9" y="618.2" fill="#333" text-anchor="start" >Stacked-Axis</text>
<text x="176.1" y="618.2" fill="#333" text-anchor="start" >Name</text>
<text x="485.5" y="618.2" fill="#333" text-anchor="start" >Description</text>
<text x="1063" y="618.2" fill="#333" text-anchor="start" >Scan Rate</text>
<text x="1171.2" y="618.2" fill="#333" text-anchor="start" >Average</text>
<text x="1305.4" y="618.2" fill="#333" text-anchor="start" >Units</text>
<text x="1385" y="618.2" fill="#333" text-anchor="start" >Min</text>
<text x="1488" y="618.2" fill="#333" text-anchor="start" >Max</text>
<path d="M1282.3,610.6 h7 l-3.5,6.2 z" fill="#222"/>
<rect x="22.1" y="634.3" width="17.6" height="13.6" fill="#bfe0f0"/>
<text x="11.3" y="644.7" fill="#222" text-anchor="start" font-size="8.7" letter-spacing="0">L</text>
<text x="28.6" y="644.7" fill="#222" text-anchor="start" font-size="8.7" letter-spacing="0">R</text>
<text x="50" y="642.7" fill="#222" text-anchor="start" font-size="8.7">1</text>
<path d="M61.3,637.5 l3.9,3.9 l3.9,-3.9" fill="none" stroke="#111" stroke-width="1.9"/>
<polygon points="87.59,638.85 88.93,638.92 88.93,640.48 87.59,640.55 87.25,641.36 88.16,642.36 87.06,643.46 86.06,642.55 85.25,642.89 85.18,644.23 83.62,644.23 83.55,642.89 82.74,642.55 81.74,643.46 80.64,642.36 81.55,641.36 81.21,640.55 79.87,640.48 79.87,638.92 81.21,638.85 81.55,638.04 80.64,637.04 81.74,635.94 82.74,636.85 83.55,636.51 83.62,635.17 85.18,635.17 85.25,636.51 86.06,636.85 87.06,635.94 88.16,637.04 87.25,638.04" fill="#111"/><circle cx="84.4" cy="639.7" r="1.5" fill="#fff"/>
<rect x="106.1" y="632" width="18" height="17.7" fill="#9aeaf0"/>
<path d="M129,647.9 l5.5,-5.5 l3.5,3 l7.8,-10.8 v13.3 z" fill="#111"/>
<rect x="154" y="635" width="13" height="13" rx="1.8" fill="#666"/>
<path d="M156.8,641.5 l2.7,2.8 l5,-5.6" fill="none" stroke="#fff" stroke-width="1.8"/>
<rect x="174.5" y="630.4" width="74.0" height="19.8" rx="3.5" fill="#fff" stroke="#cfcfcf" stroke-width="1"/>
<line x1="231.8" y1="630.4" x2="231.8" y2="650.2" stroke="#cfcfcf" stroke-width="1"/>
<path d="M237.10000000000002,638.0 l5,5 M242.10000000000002,638.0 l-5,5" stroke="#777" stroke-width="1"/>
<path d="M181.5,635.2 h4.3 l5,5 l-4.4,4.4 l-5,-5 z" fill="#111"/><circle cx="183.5" cy="637.2" r="0.9" fill="#fff"/>
<text x="193.4" y="644.5" fill="#222" text-anchor="start" >Arsenic</text>
<circle cx="426.3" cy="641.5" r="6.4" fill="#666"/>
<circle cx="426.5" cy="638.2" r="1.1" fill="#fff"/><path d="M424.6,640.0 h2.9 v4.7 h1 v1.3 h-4 v-1.3 h1 v-3.4 h-0.9 z" fill="#fff"/>
<path d="M439.3,648.3 l1.2,-4.2 l8.3,-8.3 l3,3 l-8.3,8.3 z" fill="#666"/><path d="M440.8,643.8 l3,3" stroke="#fff" stroke-width="0.8"/><path d="M447.3,637.2 l3,3" stroke="#fff" stroke-width="0.6"/>
<text x="458.6" y="647.0" fill="#555" font-family='"Liberation Serif", serif' font-style="italic" font-size="16" letter-spacing="1.6">fx</text>
<text x="488.5" y="644.5" fill="#222" text-anchor="start" ></text>
<text x="1061.8" y="644.5" fill="#222" text-anchor="start" >0d 0h 0m 10s</text>
<text x="1161.6" y="644.5" fill="#222" text-anchor="start" >270.87</text>
<text x="1308.6" y="644.5" fill="#222" text-anchor="start" >cmHg</text>
<path d="M1363.7,637.5 h7.3 l-3.65,6.3 z" fill="#222"/>
<text x="1389" y="644.5" fill="#222" text-anchor="start" >157.79</text>
<path d="M1472.3,636.0 l6,6 M1478.3,636.0 l-6,6" stroke="#111" stroke-width="2"/>
<text x="1491.4" y="644.5" fill="#222" text-anchor="start" >490.09</text>
<path d="M1575,636.0 l6,6 M1581,636.0 l-6,6" stroke="#111" stroke-width="2"/>
<path d="M1597.5,634.5 l2.8,3 h-1.8 v5.8 h1.8 l-2.8,3 l-2.8,-3 h1.8 v-5.8 h-1.8 z" fill="#111"/>
<path d="M1634.4,636.0 h11 M1637.8,636.0 v-1.6 h4.2 v1.6" fill="none" stroke="#222" stroke-width="1.2"/>
<rect x="1635.6" y="637.5" width="8.6" height="9.5" rx="1" fill="none" stroke="#222" stroke-width="1.3"/>
<path d="M1638.2,639.3 v6 M1639.9,639.3 v6 M1641.6,639.3 v6" stroke="#222" stroke-width="0.9"/>
<rect x="4.9" y="661" width="16.9" height="13.9" fill="#bfe0f0"/>
<text x="11.3" y="671.7" fill="#222" text-anchor="start" font-size="8.7" letter-spacing="0">L</text>
<text x="28.6" y="671.7" fill="#222" text-anchor="start" font-size="8.7" letter-spacing="0">R</text>
<text x="50" y="669.7" fill="#222" text-anchor="start" font-size="8.7">2</text>
<path d="M61.3,664.5 l3.9,3.9 l3.9,-3.9" fill="none" stroke="#111" stroke-width="1.9"/>
<polygon points="87.59,665.85 88.93,665.92 88.93,667.48 87.59,667.55 87.25,668.36 88.16,669.36 87.06,670.46 86.06,669.55 85.25,669.89 85.18,671.23 83.62,671.23 83.55,669.89 82.74,669.55 81.74,670.46 80.64,669.36 81.55,668.36 81.21,667.55 79.87,667.48 79.87,665.92 81.21,665.85 81.55,665.04 80.64,664.04 81.74,662.94 82.74,663.85 83.55,663.51 83.62,662.17 85.18,662.17 85.25,663.51 86.06,663.85 87.06,662.94 88.16,664.04 87.25,665.04" fill="#111"/><circle cx="84.4" cy="666.7" r="1.5" fill="#fff"/>
<rect x="106.1" y="659" width="18" height="17.7" fill="#8a08ec"/>
<path d="M129,674.9 l5.5,-5.5 l3.5,3 l7.8,-10.8 v13.3 z" fill="#111"/>
<rect x="154" y="662" width="13" height="13" rx="1.8" fill="#666"/>
<path d="M156.8,668.5 l2.7,2.8 l5,-5.6" fill="none" stroke="#fff" stroke-width="1.8"/>
<rect x="174.5" y="657.4" width="239.2" height="19.8" rx="3.5" fill="#fff" stroke="#cfcfcf" stroke-width="1"/>
<line x1="397.5" y1="657.4" x2="397.5" y2="677.2" stroke="#cfcfcf" stroke-width="1"/>
<path d="M402.8,665.0 l5,5 M407.8,665.0 l-5,5" stroke="#777" stroke-width="1"/>
<circle cx="186" cy="667.5" r="3.7" fill="#9a9a9a"/>
<text x="193.4" y="671.5" fill="#222" text-anchor="start" >Archer Well <tspan font-size="13" letter-spacing="0">→</tspan> Oil Producing Well <tspan font-size="13" letter-spacing="0">→</tspan> TH...</text>
<circle cx="426.3" cy="668.5" r="6.4" fill="#666"/>
<circle cx="426.5" cy="665.2" r="1.1" fill="#fff"/><path d="M424.6,667.0 h2.9 v4.7 h1 v1.3 h-4 v-1.3 h1 v-3.4 h-0.9 z" fill="#fff"/>
<path d="M439.3,675.3 l1.2,-4.2 l8.3,-8.3 l3,3 l-8.3,8.3 z" fill="#666"/><path d="M440.8,670.8 l3,3" stroke="#fff" stroke-width="0.8"/><path d="M447.3,664.2 l3,3" stroke="#fff" stroke-width="0.6"/>
<text x="458.6" y="674.0" fill="#555" font-family='"Liberation Serif", serif' font-style="italic" font-size="16" letter-spacing="1.6">fx</text>
<text x="488.5" y="671.5" fill="#222" text-anchor="start" ></text>
<text x="1061.8" y="671.5" fill="#222" text-anchor="start" ></text>
<text x="1161.6" y="671.5" fill="#222" text-anchor="start" >55.07</text>
<text x="1308.6" y="671.5" fill="#222" text-anchor="start" >$/Mbbl</text>
<path d="M1363.7,664.5 h7.3 l-3.65,6.3 z" fill="#222"/>
<text x="1389" y="671.5" fill="#222" text-anchor="start" >1.24</text>
<path d="M1472.3,663.0 l6,6 M1478.3,663.0 l-6,6" stroke="#111" stroke-width="2"/>
<text x="1491.4" y="671.5" fill="#222" text-anchor="start" >102.89</text>
<path d="M1575,663.0 l6,6 M1581,663.0 l-6,6" stroke="#111" stroke-width="2"/>
<path d="M1597.5,661.5 l2.8,3 h-1.8 v5.8 h1.8 l-2.8,3 l-2.8,-3 h1.8 v-5.8 h-1.8 z" fill="#111"/>
<path d="M1634.4,663.0 h11 M1637.8,663.0 v-1.6 h4.2 v1.6" fill="none" stroke="#222" stroke-width="1.2"/>
<rect x="1635.6" y="664.5" width="8.6" height="9.5" rx="1" fill="none" stroke="#222" stroke-width="1.3"/>
<path d="M1638.2,666.3 v6 M1639.9,666.3 v6 M1641.6,666.3 v6" stroke="#222" stroke-width="0.9"/>
<rect x="22.1" y="688.3" width="17.6" height="13.6" fill="#bfe0f0"/>
<text x="11.3" y="698.7" fill="#222" text-anchor="start" font-size="8.7" letter-spacing="0">L</text>
<text x="28.6" y="698.7" fill="#222" text-anchor="start" font-size="8.7" letter-spacing="0">R</text>
<text x="50" y="696.7" fill="#222" text-anchor="start" font-size="8.7">3</text>
<path d="M61.3,691.5 l3.9,3.9 l3.9,-3.9" fill="none" stroke="#111" stroke-width="1.9"/>
<polygon points="87.59,692.85 88.93,692.92 88.93,694.48 87.59,694.55 87.25,695.36 88.16,696.36 87.06,697.46 86.06,696.55 85.25,696.89 85.18,698.23 83.62,698.23 83.55,696.89 82.74,696.55 81.74,697.46 80.64,696.36 81.55,695.36 81.21,694.55 79.87,694.48 79.87,692.92 81.21,692.85 81.55,692.04 80.64,691.04 81.74,689.94 82.74,690.85 83.55,690.51 83.62,689.17 85.18,689.17 85.25,690.51 86.06,690.85 87.06,689.94 88.16,691.04 87.25,692.04" fill="#111"/><circle cx="84.4" cy="693.7" r="1.5" fill="#fff"/>
<rect x="106.1" y="686" width="18" height="17.7" fill="#4285f4"/>
<path d="M130,701.2 l5,-6.5 l3.5,3.5 l7.2,-7.8" fill="none" stroke="#111" stroke-width="1.3"/>
<rect x="154" y="689" width="13" height="13" rx="1.8" fill="#666"/>
<path d="M156.8,695.5 l2.7,2.8 l5,-5.6" fill="none" stroke="#fff" stroke-width="1.8"/>
<rect x="174.5" y="684.4" width="239.2" height="19.8" rx="3.5" fill="#fff" stroke="#cfcfcf" stroke-width="1"/>
<line x1="397.5" y1="684.4" x2="397.5" y2="704.2" stroke="#cfcfcf" stroke-width="1"/>
<path d="M402.8,692.0 l5,5 M407.8,692.0 l-5,5" stroke="#777" stroke-width="1"/>
<circle cx="186" cy="694.5" r="3.7" fill="#9a9a9a"/>
<text x="193.4" y="698.5" fill="#222" text-anchor="start" >Archer Well <tspan font-size="13" letter-spacing="0">→</tspan> Oil Producing Well <tspan font-size="13" letter-spacing="0">→</tspan> Tu...</text>
<circle cx="426.3" cy="695.5" r="6.4" fill="#666"/>
<circle cx="426.5" cy="692.2" r="1.1" fill="#fff"/><path d="M424.6,694.0 h2.9 v4.7 h1 v1.3 h-4 v-1.3 h1 v-3.4 h-0.9 z" fill="#fff"/>
<path d="M439.3,702.3 l1.2,-4.2 l8.3,-8.3 l3,3 l-8.3,8.3 z" fill="#666"/><path d="M440.8,697.8 l3,3" stroke="#fff" stroke-width="0.8"/><path d="M447.3,691.2 l3,3" stroke="#fff" stroke-width="0.6"/>
<text x="458.6" y="701.0" fill="#555" font-family='"Liberation Serif", serif' font-style="italic" font-size="16" letter-spacing="1.6">fx</text>
<text x="488.5" y="698.5" fill="#222" text-anchor="start" ></text>
<text x="1061.8" y="698.5" fill="#222" text-anchor="start" >0d 0h 0m 10s</text>
<text x="1161.6" y="698.5" fill="#222" text-anchor="start" >370.437</text>
<text x="1308.6" y="698.5" fill="#222" text-anchor="start" >bbl</text>
<path d="M1363.7,691.5 h7.3 l-3.65,6.3 z" fill="#222"/>
<text x="1389" y="698.5" fill="#222" text-anchor="start" >135.79</text>
<path d="M1472.3,690.0 l6,6 M1478.3,690.0 l-6,6" stroke="#111" stroke-width="2"/>
<text x="1491.4" y="698.5" fill="#222" text-anchor="start" >441.77</text>
<path d="M1575,690.0 l6,6 M1581,690.0 l-6,6" stroke="#111" stroke-width="2"/>
<path d="M1597.5,688.5 l2.8,3 h-1.8 v5.8 h1.8 l-2.8,3 l-2.8,-3 h1.8 v-5.8 h-1.8 z" fill="#111"/>
<path d="M1634.4,690.0 h11 M1637.8,690.0 v-1.6 h4.2 v1.6" fill="none" stroke="#222" stroke-width="1.2"/>
<rect x="1635.6" y="691.5" width="8.6" height="9.5" rx="1" fill="none" stroke="#222" stroke-width="1.3"/>
<path d="M1638.2,693.3 v6 M1639.9,693.3 v6 M1641.6,693.3 v6" stroke="#222" stroke-width="0.9"/>
<rect x="4.9" y="715" width="16.9" height="13.9" fill="#bfe0f0"/>
<text x="11.3" y="725.7" fill="#222" text-anchor="start" font-size="8.7" letter-spacing="0">L</text>
<text x="28.6" y="725.7" fill="#222" text-anchor="start" font-size="8.7" letter-spacing="0">R</text>
<text x="50" y="723.7" fill="#222" text-anchor="start" font-size="8.7">4</text>
<path d="M61.3,718.5 l3.9,3.9 l3.9,-3.9" fill="none" stroke="#111" stroke-width="1.9"/>
<polygon points="87.59,719.85 88.93,719.92 88.93,721.48 87.59,721.55 87.25,722.36 88.16,723.36 87.06,724.46 86.06,723.55 85.25,723.89 85.18,725.23 83.62,725.23 83.55,723.89 82.74,723.55 81.74,724.46 80.64,723.36 81.55,722.36 81.21,721.55 79.87,721.48 79.87,719.92 81.21,719.85 81.55,719.04 80.64,718.04 81.74,716.94 82.74,717.85 83.55,717.51 83.62,716.17 85.18,716.17 85.25,717.51 86.06,717.85 87.06,716.94 88.16,718.04 87.25,719.04" fill="#111"/><circle cx="84.4" cy="720.7" r="1.5" fill="#fff"/>
<rect x="106.1" y="713" width="18" height="17.7" fill="#c2d0ea"/>
<path d="M130,728.2 l5,-6.5 l3.5,3.5 l7.2,-7.8" fill="none" stroke="#111" stroke-width="1.3"/>
<rect x="154" y="716" width="13" height="13" rx="1.8" fill="#666"/>
<path d="M156.8,722.5 l2.7,2.8 l5,-5.6" fill="none" stroke="#fff" stroke-width="1.8"/>
<rect x="174.5" y="711.4" width="57.900000000000006" height="19.8" rx="3.5" fill="#fff" stroke="#cfcfcf" stroke-width="1"/>
<line x1="215.6" y1="711.4" x2="215.6" y2="731.2" stroke="#cfcfcf" stroke-width="1"/>
<path d="M220.9,719.0 l5,5 M225.9,719.0 l-5,5" stroke="#777" stroke-width="1"/>
<path d="M181.5,716.2 h4.3 l5,5 l-4.4,4.4 l-5,-5 z" fill="#111"/><circle cx="183.5" cy="718.2" r="0.9" fill="#fff"/>
<text x="193.4" y="725.5" fill="#222" text-anchor="start" >Iron</text>
<circle cx="426.3" cy="722.5" r="6.4" fill="#666"/>
<circle cx="426.5" cy="719.2" r="1.1" fill="#fff"/><path d="M424.6,721.0 h2.9 v4.7 h1 v1.3 h-4 v-1.3 h1 v-3.4 h-0.9 z" fill="#fff"/>
<path d="M439.3,729.3 l1.2,-4.2 l8.3,-8.3 l3,3 l-8.3,8.3 z" fill="#666"/><path d="M440.8,724.8 l3,3" stroke="#fff" stroke-width="0.8"/><path d="M447.3,718.2 l3,3" stroke="#fff" stroke-width="0.6"/>
<text x="458.6" y="728.0" fill="#555" font-family='"Liberation Serif", serif' font-style="italic" font-size="16" letter-spacing="1.6">fx</text>
<text x="488.5" y="725.5" fill="#222" text-anchor="start" >Iron</text>
<text x="1061.8" y="725.5" fill="#222" text-anchor="start" >0d 0h 0m 10s</text>
<text x="1161.6" y="725.5" fill="#222" text-anchor="start" >651.9786383723</text>
<text x="1308.6" y="725.5" fill="#222" text-anchor="start" ></text>
<path d="M1363.7,718.5 h7.3 l-3.65,6.3 z" fill="#222"/>
<text x="1389" y="725.5" fill="#222" text-anchor="start" >577.07</text>
<path d="M1472.3,717.0 l6,6 M1478.3,717.0 l-6,6" stroke="#111" stroke-width="2"/>
<text x="1491.4" y="725.5" fill="#222" text-anchor="start" >790.49</text>
<path d="M1575,717.0 l6,6 M1581,717.0 l-6,6" stroke="#111" stroke-width="2"/>
<path d="M1597.5,715.5 l2.8,3 h-1.8 v5.8 h1.8 l-2.8,3 l-2.8,-3 h1.8 v-5.8 h-1.8 z" fill="#111"/>
<path d="M1634.4,717.0 h11 M1637.8,717.0 v-1.6 h4.2 v1.6" fill="none" stroke="#222" stroke-width="1.2"/>
<rect x="1635.6" y="718.5" width="8.6" height="9.5" rx="1" fill="none" stroke="#222" stroke-width="1.3"/>
<path d="M1638.2,720.3 v6 M1639.9,720.3 v6 M1641.6,720.3 v6" stroke="#222" stroke-width="0.9"/>
<rect x="4.9" y="742" width="16.9" height="13.9" fill="#bfe0f0"/>
<text x="11.3" y="752.7" fill="#222" text-anchor="start" font-size="8.7" letter-spacing="0">L</text>
<text x="28.6" y="752.7" fill="#222" text-anchor="start" font-size="8.7" letter-spacing="0">R</text>
<text x="50" y="750.7" fill="#222" text-anchor="start" font-size="8.7">5</text>
<path d="M61.3,745.5 l3.9,3.9 l3.9,-3.9" fill="none" stroke="#111" stroke-width="1.9"/>
<polygon points="87.59,746.85 88.93,746.92 88.93,748.48 87.59,748.55 87.25,749.36 88.16,750.36 87.06,751.46 86.06,750.55 85.25,750.89 85.18,752.23 83.62,752.23 83.55,750.89 82.74,750.55 81.74,751.46 80.64,750.36 81.55,749.36 81.21,748.55 79.87,748.48 79.87,746.92 81.21,746.85 81.55,746.04 80.64,745.04 81.74,743.94 82.74,744.85 83.55,744.51 83.62,743.17 85.18,743.17 85.25,744.51 86.06,744.85 87.06,743.94 88.16,745.04 87.25,746.04" fill="#111"/><circle cx="84.4" cy="747.7" r="1.5" fill="#fff"/>
<rect x="106.1" y="740" width="18" height="17.7" fill="#800090"/>
<path d="M130,755.2 l5,-6.5 l3.5,3.5 l7.2,-7.8" fill="none" stroke="#111" stroke-width="1.3"/>
<rect x="154" y="743" width="13" height="13" rx="1.8" fill="#666"/>
<path d="M156.8,749.5 l2.7,2.8 l5,-5.6" fill="none" stroke="#fff" stroke-width="1.8"/>
<rect x="174.5" y="738.4" width="69.80000000000001" height="19.8" rx="3.5" fill="#fff" stroke="#cfcfcf" stroke-width="1"/>
<line x1="228.3" y1="738.4" x2="228.3" y2="758.2" stroke="#cfcfcf" stroke-width="1"/>
<path d="M233.60000000000002,746.0 l5,5 M238.60000000000002,746.0 l-5,5" stroke="#777" stroke-width="1"/>
<path d="M181.5,743.2 h4.3 l5,5 l-4.4,4.4 l-5,-5 z" fill="#111"/><circle cx="183.5" cy="745.2" r="0.9" fill="#fff"/>
<text x="193.4" y="752.5" fill="#222" text-anchor="start" >Silicon</text>
<circle cx="426.3" cy="749.5" r="6.4" fill="#666"/>
<circle cx="426.5" cy="746.2" r="1.1" fill="#fff"/><path d="M424.6,748.0 h2.9 v4.7 h1 v1.3 h-4 v-1.3 h1 v-3.4 h-0.9 z" fill="#fff"/>
<path d="M439.3,756.3 l1.2,-4.2 l8.3,-8.3 l3,3 l-8.3,8.3 z" fill="#666"/><path d="M440.8,751.8 l3,3" stroke="#fff" stroke-width="0.8"/><path d="M447.3,745.2 l3,3" stroke="#fff" stroke-width="0.6"/>
<text x="458.6" y="755.0" fill="#555" font-family='"Liberation Serif", serif' font-style="italic" font-size="16" letter-spacing="1.6">fx</text>
<text x="488.5" y="752.5" fill="#222" text-anchor="start" >Silicon</text>
<text x="1061.8" y="752.5" fill="#222" text-anchor="start" >0d 0h 0m 10s</text>
<text x="1161.6" y="752.5" fill="#222" text-anchor="start" >-902.71</text>
<text x="1308.6" y="752.5" fill="#222" text-anchor="start" >cmHg</text>
<path d="M1363.7,745.5 h7.3 l-3.65,6.3 z" fill="#222"/>
<text x="1389" y="752.5" fill="#222" text-anchor="start" >-964.4</text>
<path d="M1472.3,744.0 l6,6 M1478.3,744.0 l-6,6" stroke="#111" stroke-width="2"/>
<text x="1491.4" y="752.5" fill="#222" text-anchor="start" >-671.4</text>
<path d="M1575,744.0 l6,6 M1581,744.0 l-6,6" stroke="#111" stroke-width="2"/>
<path d="M1597.5,742.5 l2.8,3 h-1.8 v5.8 h1.8 l-2.8,3 l-2.8,-3 h1.8 v-5.8 h-1.8 z" fill="#111"/>
<path d="M1634.4,744.0 h11 M1637.8,744.0 v-1.6 h4.2 v1.6" fill="none" stroke="#222" stroke-width="1.2"/>
<rect x="1635.6" y="745.5" width="8.6" height="9.5" rx="1" fill="none" stroke="#222" stroke-width="1.3"/>
<path d="M1638.2,747.3 v6 M1639.9,747.3 v6 M1641.6,747.3 v6" stroke="#222" stroke-width="0.9"/>
<rect x="37.5" y="624.6" width="41" height="140.9" fill="none" stroke="#fc8012" stroke-width="3"/>
</svg>
</body></html>
